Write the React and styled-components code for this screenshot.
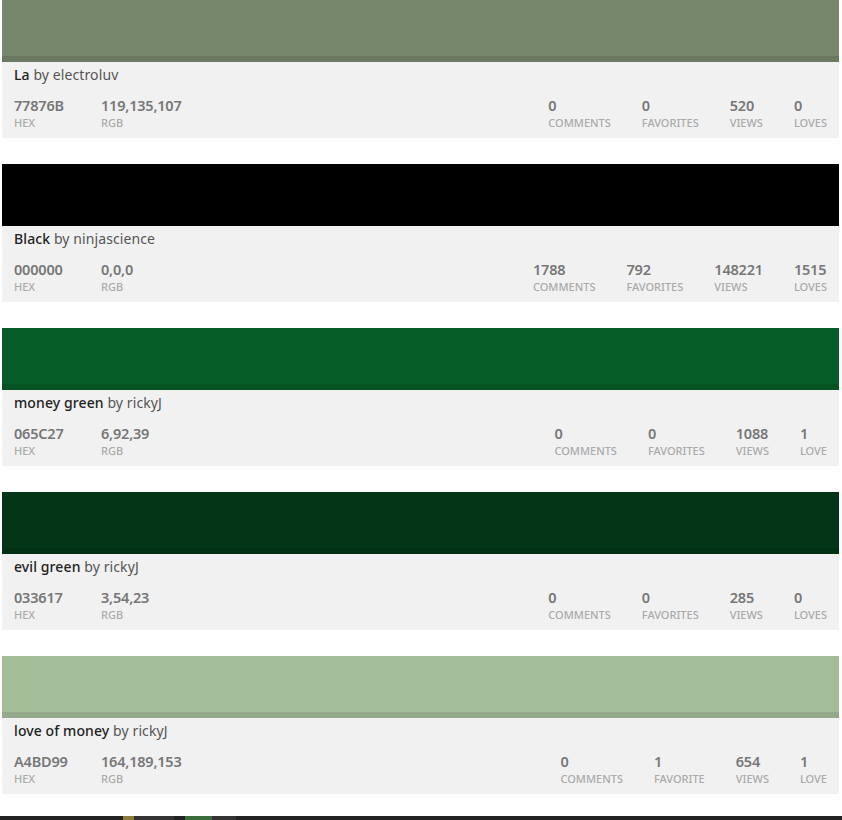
import styled, { createGlobalStyle } from 'styled-components';

const GlobalStyle = createGlobalStyle`
  body {
    margin: 0;
    background: #fff;
    font-family: "Noto Sans", "Open Sans", sans-serif;
  }
`;

const Page = styled.div`
  padding: 0 3px 0 2px;
  width: 842px;
  box-sizing: border-box;
`;

const Card = styled.div`
  margin-bottom: 26px;
  &:last-of-type {
    margin-bottom: 22px;
  }
`;

const Swatch = styled.div`
  height: 62px;
  background: ${(p) => p.color};
  box-shadow: inset 0 -6px 0 rgba(0, 0, 0, 0.1);
`;

const Info = styled.div`
  height: 76px;
  background: #f1f1f1;
  padding: 3px 12px 0 12px;
  box-sizing: border-box;
`;

const Title = styled.div`
  font-size: 14px;
  color: #555;
  letter-spacing: 0.1px;
  line-height: 20px;
  b {
    font-weight: 500;
    color: #222;
  }
`;

const Row = styled.div`
  display: flex;
  align-items: flex-start;
  margin-top: 11px;
`;

const Stat = styled.div`
  display: flex;
  flex-direction: column;
  min-width: ${(p) => p.width || 0}px;
`;

const Value = styled.span`
  font-size: 14.5px;
  font-weight: 600;
  color: #777;
  letter-spacing: -0.2px;
  line-height: 18px;
`;

const Label = styled.span`
  font-size: 11px;
  font-weight: 500;
  color: #aaa;
  text-transform: uppercase;
  letter-spacing: 0;
  line-height: 16px;
  padding-top: 1px;
`;

const Right = styled.div`
  margin-left: auto;
  display: flex;
  gap: 31px;
`;

const BottomBar = styled.div`
  display: flex;
  height: 4px;
  background: #222;
`;

const Seg = styled.div`
  width: ${(p) => p.w}px;
  background: ${(p) => p.color};
`;

const colors = [
  {
    name: 'La', user: 'electroluv', hex: '77876B', rgb: '119,135,107', swatch: '#77876b',
    stats: [['0', 'Comments'], ['0', 'Favorites'], ['520', 'Views'], ['0', 'Loves']],
  },
  {
    name: 'Black', user: 'ninjascience', hex: '000000', rgb: '0,0,0', swatch: '#000000',
    stats: [['1788', 'Comments'], ['792', 'Favorites'], ['148221', 'Views'], ['1515', 'Loves']],
  },
  {
    name: 'money green', user: 'rickyJ', hex: '065C27', rgb: '6,92,39', swatch: '#065c27',
    stats: [['0', 'Comments'], ['0', 'Favorites'], ['1088', 'Views'], ['1', 'Love']],
  },
  {
    name: 'evil green', user: 'rickyJ', hex: '033617', rgb: '3,54,23', swatch: '#033617',
    stats: [['0', 'Comments'], ['0', 'Favorites'], ['285', 'Views'], ['0', 'Loves']],
  },
  {
    name: 'love of money', user: 'rickyJ', hex: 'A4BD99', rgb: '164,189,153', swatch: '#a4bd99',
    stats: [['0', 'Comments'], ['1', 'Favorite'], ['654', 'Views'], ['1', 'Love']],
  },
];

export default function App() {
  return (
    <>
      <GlobalStyle />
      <Page>
        {colors.map((c) => (
          <Card key={c.hex}>
            <Swatch color={c.swatch} />
            <Info>
              <Title>
                <b>{c.name}</b> by {c.user}
              </Title>
              <Row>
                <Stat width={87}>
                  <Value>{c.hex}</Value>
                  <Label>Hex</Label>
                </Stat>
                <Stat>
                  <Value>{c.rgb}</Value>
                  <Label>RGB</Label>
                </Stat>
                <Right>
                  {c.stats.map(([n, l]) => (
                    <Stat key={l}>
                      <Value>{n}</Value>
                      <Label>{l}</Label>
                    </Stat>
                  ))}
                </Right>
              </Row>
            </Info>
          </Card>
        ))}
      </Page>
      <BottomBar>
        <Seg w={123} color="#222" />
        <Seg w={11} color="#8a7d3a" />
        <Seg w={40} color="#333" />
        <Seg w={11} color="#222" />
        <Seg w={27} color="#3a6b3a" />
        <Seg w={24} color="#333" />
      </BottomBar>
    </>
  );
}
